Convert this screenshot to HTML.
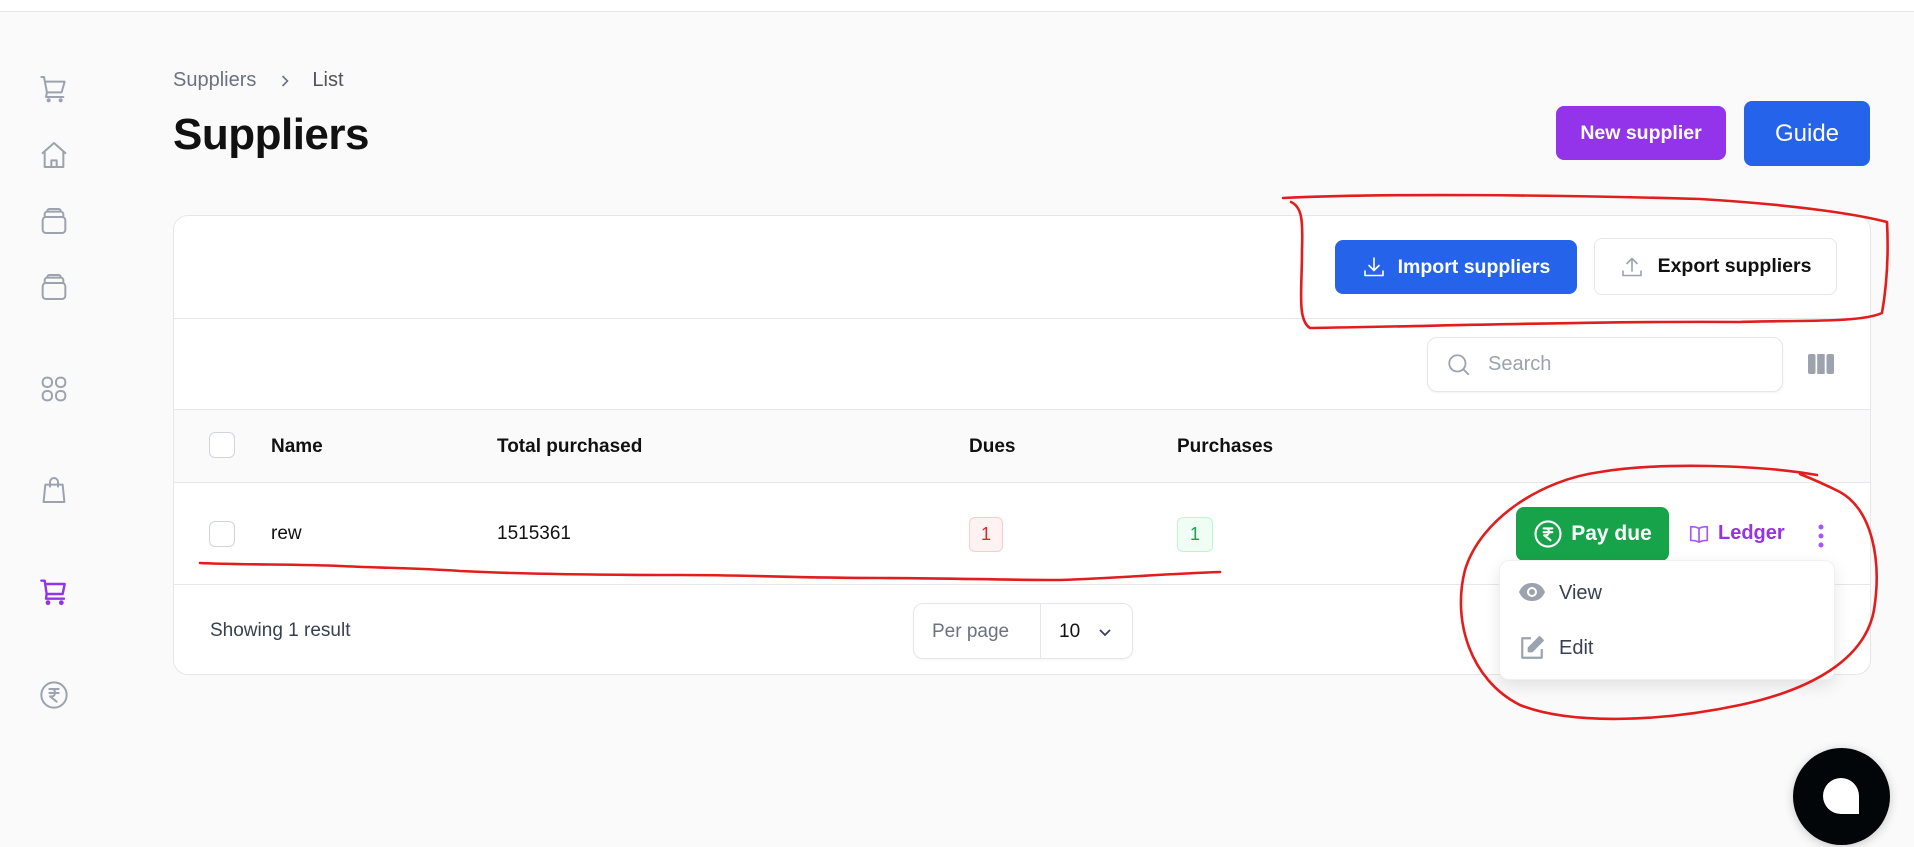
<!DOCTYPE html>
<html><head><meta charset="utf-8"><style>
*{box-sizing:border-box;margin:0;padding:0}
body{width:1914px;height:847px;background:#fafafa;font-family:"Liberation Sans",sans-serif;position:relative;overflow:hidden;color:#111}
.a{position:absolute}
.topbar{left:0;top:0;width:1914px;height:12px;background:#fff;border-bottom:1px solid #e5e7eb}
.ic{position:absolute;left:38px;width:32px;height:32px}
.card{left:173px;top:215px;width:1698px;height:460px;background:#fff;border:1px solid #e5e7eb;border-radius:15px;overflow:hidden}
.hl{position:absolute;left:0;width:100%;height:1px;background:#e5e7eb}
.btn{position:absolute;display:flex;align-items:center;justify-content:center;font-weight:bold;border-radius:8px}
.cb{position:absolute;left:35px;width:26px;height:26px;border:1.5px solid #d1d5db;border-radius:6px;background:#fff}
.th{position:absolute;top:221px;font-size:19px;font-weight:bold;line-height:1}
.td{position:absolute;top:308px;font-size:19px;line-height:1}
</style></head><body>
<div class="a topbar"></div>
<svg class="ic" style="top:73px" viewBox="0 0 24 24" fill="none" stroke="#9ca3af" stroke-width="1.5" stroke-linecap="round" stroke-linejoin="round"><path d="M2.5 3h2l2.2 11.5h11l2.3-8H6"/><path d="M6.7 14.5L6 18h13"/><circle cx="8" cy="20.5" r=".8"/><circle cx="17" cy="20.5" r=".8"/></svg>
<svg class="ic" style="top:139px" viewBox="0 0 24 24" fill="none" stroke="#9ca3af" stroke-width="1.5" stroke-linejoin="round"><path d="M3 11L12 3l9 8M5 9.5V21h14V9.5"/><path d="M10 21v-5h4v5"/></svg>
<svg class="ic" style="top:205px" viewBox="0 0 24 24" fill="none" stroke="#9ca3af" stroke-width="1.5"><rect x="3.5" y="9" width="17" height="12" rx="2.5"/><path d="M5 9V7a2 2 0 0 1 2-2h10a2 2 0 0 1 2 2v2M7 5V4.5A1.5 1.5 0 0 1 8.5 3h7A1.5 1.5 0 0 1 17 4.5V5"/></svg>
<svg class="ic" style="top:271px" viewBox="0 0 24 24" fill="none" stroke="#9ca3af" stroke-width="1.5"><rect x="3.5" y="9" width="17" height="12" rx="2.5"/><path d="M5 9V7a2 2 0 0 1 2-2h10a2 2 0 0 1 2 2v2M7 5V4.5A1.5 1.5 0 0 1 8.5 3h7A1.5 1.5 0 0 1 17 4.5V5"/></svg>
<svg class="ic" style="top:373px" viewBox="0 0 24 24" fill="none" stroke="#9ca3af" stroke-width="1.5"><rect x="3.5" y="3.5" width="7" height="7" rx="3"/><rect x="13.5" y="3.5" width="7" height="7" rx="3"/><rect x="3.5" y="13.5" width="7" height="7" rx="3"/><rect x="13.5" y="13.5" width="7" height="7" rx="3"/></svg>
<svg class="ic" style="top:474px" viewBox="0 0 24 24" fill="none" stroke="#9ca3af" stroke-width="1.5" stroke-linejoin="round"><path d="M5.5 8h13l1.3 13H4.2z"/><path d="M9 10V6a3 3 0 0 1 6 0v4"/></svg>
<svg class="ic" style="top:576px" viewBox="0 0 24 24" fill="none" stroke="#9333ea" stroke-width="1.8" stroke-linecap="round" stroke-linejoin="round"><path d="M2.5 3.5h2.5l1.5 10h12l1.5-7.5H5.5"/><path d="M6.5 13.5L6 17h13.5"/><circle cx="7.5" cy="20" r=".9" fill="#9333ea"/><circle cx="17.5" cy="20" r=".9" fill="#9333ea"/></svg>
<svg class="ic" style="top:679px" viewBox="0 0 24 24" fill="none" stroke="#9ca3af" stroke-width="1.5" stroke-linecap="round" stroke-linejoin="round"><circle cx="12" cy="12" r="9.5"/><path d="M8.5 7.5h7M8.5 10.5h7M10.5 7.5c3 0 3 5.5 0 5.5H9l5 4"/></svg>
<div class="a" style="left:173px;top:69px;font-size:20px;color:#6b7280;display:flex;align-items:center">Suppliers<svg width="14" height="14" viewBox="0 0 14 14" fill="none" stroke="#6b7280" stroke-width="1.6" style="margin:0 20px 0 22px"><path d="M4.5 2l5 5-5 5"/></svg><span style="color:#52525b">List</span></div>
<div class="a" style="left:173px;top:110px;font-size:44px;font-weight:bold;letter-spacing:-0.5px">Suppliers</div>
<div class="btn" style="left:1556px;top:106px;width:170px;height:54px;background:#9333ea;color:#fff;font-size:19.5px">New supplier</div>
<div class="btn" style="left:1744px;top:101px;width:126px;height:65px;background:#2563eb;color:#fff;font-size:24px;font-weight:normal">Guide</div>
<div class="a card">
<div class="hl" style="top:102px"></div>
<div class="hl" style="top:193px"></div>
<div style="position:absolute;left:0;top:194px;width:100%;height:72px;background:#fafafa"></div>
<div class="hl" style="top:266px"></div>
<div class="hl" style="top:368px"></div>
<div class="btn" style="left:1161px;top:24px;width:242px;height:54px;background:#2563eb;color:#fff;font-size:19.5px"><svg width="24" height="24" viewBox="0 0 24 24" fill="none" stroke="#fff" stroke-width="1.6" stroke-linecap="round" stroke-linejoin="round" style="margin-right:12px"><path d="M12 3v12M7 10.5l5 5 5-5M3 16v4.5h18V16"/></svg>Import suppliers</div>
<div class="btn" style="left:1420px;top:22px;width:243px;height:57px;background:#fff;border:1.5px solid #e5e7eb;color:#111;font-size:19.5px"><svg width="24" height="24" viewBox="0 0 24 24" fill="none" stroke="#9ca3af" stroke-width="1.6" stroke-linecap="round" stroke-linejoin="round" style="margin-right:14px"><path d="M12 16V4M7 8.5l5-5 5 5M3 16v4.5h18V16"/></svg>Export suppliers</div>
<div style="position:absolute;left:1253px;top:121px;width:356px;height:55px;border:1.5px solid #e5e7eb;border-radius:10px;box-shadow:0 1px 2px rgba(0,0,0,.05)"><svg width="26" height="26" viewBox="0 0 24 24" fill="none" stroke="#9ca3af" stroke-width="1.7" style="position:absolute;left:18px;top:14px"><circle cx="10.5" cy="10.5" r="7.5"/><path d="M16 16l5 5"/></svg><span style="position:absolute;left:60px;top:15px;font-size:20px;color:#9ca3af">Search</span></div>
<svg width="28" height="24" viewBox="0 0 28 24" style="position:absolute;left:1633px;top:136px"><rect x="1" y="2" width="7.5" height="20" rx="2" fill="#9ca3af"/><rect x="10.2" y="2" width="7.5" height="20" fill="#9ca3af"/><rect x="19.5" y="2" width="7.5" height="20" rx="2" fill="#9ca3af"/></svg>
<div class="cb" style="top:216px"></div>
<div class="th" style="left:97px">Name</div>
<div class="th" style="left:323px">Total purchased</div>
<div class="th" style="left:795px">Dues</div>
<div class="th" style="left:1003px">Purchases</div>
<div class="cb" style="top:305px"></div>
<div class="td" style="left:97px">rew</div>
<div class="td" style="left:323px">1515361</div>
<div style="position:absolute;left:795px;top:301px;width:34px;height:35px;border:1px solid #fecaca;background:#fef2f2;border-radius:6px;color:#dc2626;font-size:18px;text-align:center;line-height:33px">1</div>
<div style="position:absolute;left:1003px;top:301px;width:36px;height:35px;border:1px solid #bbf7d0;background:#f0fdf4;border-radius:6px;color:#16a34a;font-size:18px;text-align:center;line-height:33px">1</div>
<div class="btn" style="left:1342px;top:291px;width:153px;height:54px;background:#16a34a;color:#fff;font-size:21px"><svg width="30" height="30" viewBox="0 0 24 24" fill="none" stroke="#fff" stroke-width="1.7" stroke-linecap="round" stroke-linejoin="round" style="margin-right:8px"><circle cx="12" cy="12" r="10"/><path d="M8.5 7.5h7M8.5 10.5h7M10.5 7.5c3 0 3 5.5 0 5.5H9l5 4"/></svg>Pay due</div>
<div style="position:absolute;left:1514px;top:306px;display:flex;align-items:center;color:#9333ea;font-weight:bold;font-size:20px"><svg width="22" height="22" viewBox="0 0 24 24" fill="none" stroke="#a855f7" stroke-width="1.8" stroke-linejoin="round" style="margin-right:8px"><path d="M12 6c-2-1.5-5-2-9-2v15c4 0 7 .5 9 2 2-1.5 5-2 9-2V4c-4 0-7 .5-9 2zM12 6v15"/></svg>Ledger</div>
<svg width="10" height="26" viewBox="0 0 10 26" style="position:absolute;left:1642px;top:307px"><circle cx="5" cy="4" r="2.5" fill="#a855f7"/><circle cx="5" cy="13" r="2.5" fill="#a855f7"/><circle cx="5" cy="22" r="2.5" fill="#a855f7"/></svg>
<div style="position:absolute;left:36px;top:404px;font-size:19px;color:#374151">Showing 1 result</div>
<div style="position:absolute;left:739px;top:387px;width:220px;height:56px;border:1.5px solid #e5e7eb;border-radius:10px;box-shadow:0 1px 2px rgba(0,0,0,.05)"><span style="position:absolute;left:18px;top:17px;font-size:19px;color:#6b7280">Per page</span><div style="position:absolute;left:126px;top:0;width:1px;height:100%;background:#e5e7eb"></div><span style="position:absolute;left:145px;top:17px;font-size:19px">10</span><svg width="16" height="16" viewBox="0 0 16 16" fill="none" stroke="#374151" stroke-width="1.8" style="position:absolute;left:183px;top:20px"><path d="M3 6l5 5 5-5"/></svg></div>
</div>
<div class="a" style="left:1499px;top:560px;width:336px;height:120px;background:#fff;border:1px solid #f0f0f0;border-radius:10px;box-shadow:0 6px 16px rgba(0,0,0,.1)">
<svg width="28" height="20" viewBox="0 0 28 20" style="position:absolute;left:18px;top:21px"><path d="M1 10C4 3 9 1 14 1s10 2 13 9c-3 7-8 9-13 9S4 17 1 10z" fill="#9ca3af"/><circle cx="14" cy="10" r="5" fill="#fff"/><circle cx="14" cy="10" r="3" fill="#9ca3af"/></svg>
<span style="position:absolute;left:59px;top:21px;font-size:20px;color:#374151">View</span>
<svg width="26" height="26" viewBox="0 0 24 24" fill="none" stroke="#9ca3af" stroke-width="2" stroke-linejoin="round" style="position:absolute;left:19px;top:74px"><path d="M11 3H3v18h18v-8"/><path d="M19 2l3 3-10 10H9v-3z" fill="#9ca3af"/></svg>
<span style="position:absolute;left:59px;top:76px;font-size:20px;color:#374151">Edit</span>
</div>
<div class="a" style="left:1793px;top:748px;width:97px;height:97px;border-radius:50%;background:#030608;box-shadow:0 2px 10px rgba(0,0,0,.2)"></div>
<div class="a" style="left:1823px;top:778px;width:36px;height:36px;background:#fff;border-radius:18px 18px 0 18px"></div>
<svg class="a" style="left:0;top:0" width="1914" height="847" fill="none" stroke="#e11d1d" stroke-width="2.6" stroke-linecap="round" stroke-linejoin="round">
<path d="M1283 198C1380 193 1560 195 1700 199C1800 205 1860 215 1887 222C1889 260 1886 290 1882 313C1860 323 1800 320 1740 322C1600 321 1440 326 1310 328C1297 320 1302 290 1302 250C1303 220 1302 207 1291 202"/>
<path d="M1817 475C1760 465 1660 462 1600 472C1540 480 1480 520 1465 570C1452 620 1470 680 1520 705C1570 725 1660 722 1740 705C1810 690 1865 660 1874 610C1882 560 1872 510 1840 492C1820 482 1810 478 1800 474"/>
<path d="M200 563C240 565 300 564 340 566C380 568 420 568 460 571C520 574 600 575 680 575C750 575 800 578 880 578C950 578 1000 580 1060 580C1120 578 1160 574 1220 572"/>
</svg>
</body></html>
